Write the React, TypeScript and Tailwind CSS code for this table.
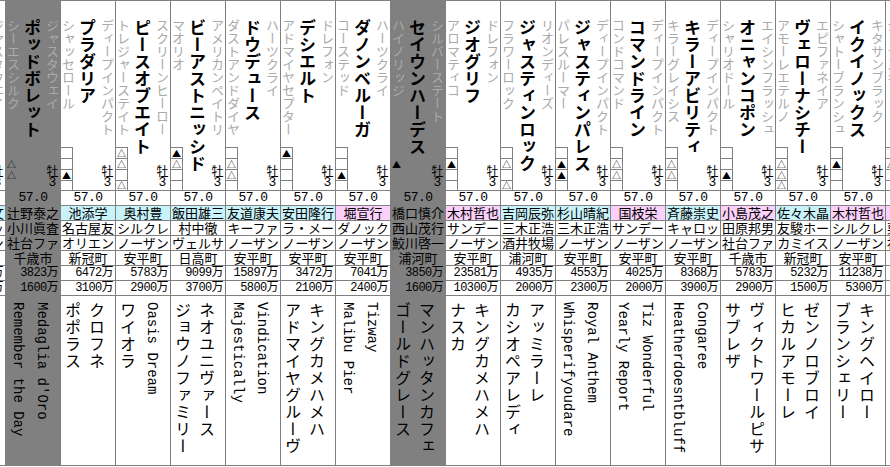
import clsx from "clsx";

// ──────────────────────────────────────────────
// Data
// ──────────────────────────────────────────────

interface Horse {
  dam: string;
  name: string;
  sire: string;
  marks: string; // 4 boxes, "-" = empty
  trainer: string;
  tc: "c" | "p" | "g";
  owner: string;
  breeder: string;
  area: string;
  earn: string;
  prize: string;
  bR: string;
  bL: string;
  gray?: boolean;
}

const horses: Horse[] = [
  { dam: "シュガーハート", name: "ソールオリエンス", sire: "ジャスタウェイ", marks: "-△--", trainer: "戸田博文", tc: "c", owner: "キャロッ", breeder: "ノーザン", area: "安平町", earn: "4562万", prize: "2100万", bR: "", bL: "" },
  { dam: "シーエスシルク", name: "ポッドボレット", sire: "ジャスタウェイ", marks: "-△△-", trainer: "辻野泰之", tc: "g", owner: "小川眞査", breeder: "社台ファ", area: "千歳市", earn: "3823万", prize: "1600万", bR: "Medaglia d'Oro", bL: "Remember the Day", gray: true },
  { dam: "シャッセロール", name: "プラダリア", sire: "ディープインパクト", marks: "--▲-", trainer: "池添学", tc: "c", owner: "名古屋友", breeder: "オリエン", area: "新冠町", earn: "6472万", prize: "3100万", bR: "クロフネ", bL: "ポポラス" },
  { dam: "トレジャーステイト", name: "ピースオブエイト", sire: "スクリーンヒーロー", marks: "△△-△", trainer: "奥村豊", tc: "c", owner: "シルクレ", breeder: "ノーザン", area: "安平町", earn: "5783万", prize: "2900万", bR: "Oasis Dream", bL: "ワイオラ" },
  { dam: "マオリオ", name: "ビーアストニッシド", sire: "アメリカンペイトリ", marks: "▲△--", trainer: "飯田雄三", tc: "c", owner: "村中徹", breeder: "ヴェルサ", area: "日高町", earn: "9099万", prize: "3700万", bR: "ネオユニヴァース", bL: "ジョウノファミリー" },
  { dam: "ダストアンドダイヤ", name: "ドウデュース", sire: "ハーツクライ", marks: "-△△-", trainer: "友道康夫", tc: "c", owner: "キーファ", breeder: "ノーザン", area: "安平町", earn: "15897万", prize: "5800万", bR: "Vindication", bL: "Majestically" },
  { dam: "アドマイヤセプター", name: "デシエルト", sire: "ドレフォン", marks: "▲---", trainer: "安田隆行", tc: "c", owner: "ラ・メー", breeder: "ノーザン", area: "安平町", earn: "3472万", prize: "2100万", bR: "キングカメハメハ", bL: "アドマイヤグルーヴ" },
  { dam: "コーステッド", name: "ダノンベルーガ", sire: "ハーツクライ", marks: "--▲-", trainer: "堀宣行", tc: "p", owner: "ダノック", breeder: "ノーザン", area: "安平町", earn: "7041万", prize: "2400万", bR: "Tizway", bL: "Malibu Pier" },
  { dam: "ハイノリッジ", name: "セイウンハーデス", sire: "シルバーステート", marks: "-▲--", trainer: "橋口慎介", tc: "g", owner: "西山茂行", breeder: "鮫川啓一", area: "浦河町", earn: "3850万", prize: "1600万", bR: "マンハッタンカフェ", bL: "ゴールドグレース", gray: true },
  { dam: "アロマティコ", name: "ジオグリフ", sire: "ドレフォン", marks: "-▲--", trainer: "木村哲也", tc: "p", owner: "サンデー", breeder: "ノーザン", area: "安平町", earn: "23581万", prize: "10300万", bR: "キングカメハメハ", bL: "ナスカ" },
  { dam: "フラワーロック", name: "ジャスティンロック", sire: "リオンディーズ", marks: "-△-△", trainer: "吉岡辰弥", tc: "c", owner: "三木正浩", breeder: "酒井牧場", area: "浦河町", earn: "4935万", prize: "2000万", bR: "アッミラーレ", bL: "カシオペアレディ" },
  { dam: "パレスルーマー", name: "ジャスティンパレス", sire: "ディープインパクト", marks: "-▲▲-", trainer: "杉山晴紀", tc: "c", owner: "三木正浩", breeder: "ノーザン", area: "安平町", earn: "4553万", prize: "2300万", bR: "Royal Anthem", bL: "Whisperifyoudare" },
  { dam: "コンドコマンド", name: "コマンドライン", sire: "ディープインパクト", marks: "-△△-", trainer: "国枝栄", tc: "p", owner: "サンデー", breeder: "ノーザン", area: "安平町", earn: "4025万", prize: "2000万", bR: "Tiz Wonderful", bL: "Yearly Report" },
  { dam: "キラーグレイシス", name: "キラーアビリティ", sire: "ディープインパクト", marks: "-△△-", trainer: "斉藤崇史", tc: "c", owner: "キャロッ", breeder: "ノーザン", area: "安平町", earn: "8368万", prize: "3900万", bR: "Congaree", bL: "Heatherdoesntbluff" },
  { dam: "シャリオドール", name: "オニャンコポン", sire: "エイシンフラッシュ", marks: "--▲-", trainer: "小島茂之", tc: "p", owner: "田原邦男", breeder: "社台ファ", area: "千歳市", earn: "5783万", prize: "2900万", bR: "ヴィクトワールピサ", bL: "サブレザ" },
  { dam: "アモーレエテルノ", name: "ヴェローナシチー", sire: "エピファネイア", marks: "-△△△", trainer: "佐々木晶", tc: "c", owner: "友駿ホー", breeder: "カミイス", area: "新冠町", earn: "5232万", prize: "1500万", bR: "ゼンノロブロイ", bL: "ヒカルアモーレ" },
  { dam: "シャトーブランシュ", name: "イクイノックス", sire: "キタサンブラック", marks: "-▲--", trainer: "木村哲也", tc: "p", owner: "シルクレ", breeder: "ノーザン", area: "安平町", earn: "11238万", prize: "5300万", bR: "キングヘイロー", bL: "ブランシェリー" },
  { dam: "ジェラスキャット", name: "ボルドグフーシュ", sire: "スクリーンヒーロー", marks: "-△--", trainer: "宮本博", tc: "p", owner: "栗本博晴", breeder: "社台ファ", area: "千歳市", earn: "6110万", prize: "2500万", bR: "Storm Cat", bL: "Jealous Again" },
];

const tcBg = {
  c: "bg-[#c9f3fb]",
  p: "bg-[#fbd0fb]",
  g: "",
};

const vert = "[writing-mode:vertical-rl] whitespace-nowrap overflow-hidden";
const mono = "font-['Liberation_Mono','Noto_Sans_CJK_JP',monospace]";
const line = "h-[15px] border-b border-[#808080] leading-[14px] whitespace-nowrap overflow-hidden";

const isLatin = (s: string) => /^[A-Za-z]/.test(s);

// ──────────────────────────────────────────────
// Pieces
// ──────────────────────────────────────────────

function Pedigree({ text }: { text: string }) {
  return (
    <div
      className={clsx(
        "h-full w-[24px] pt-[6px] leading-[24px]",
        vert,
        isLatin(text) ? clsx(mono, "text-[14px]") : "text-[16px] tracking-[1px]"
      )}
    >
      {text}
    </div>
  );
}

function Column({ h }: { h: Horse }) {
  return (
    <div
      className={clsx(
        "flex w-[55px] shrink-0 flex-col border-l border-[#808080] text-black",
        h.gray ? "bg-[#808080]" : "bg-white"
      )}
    >
      {/* names */}
      <div className="flex h-[191px] border-y border-[#808080]">
        <div className="flex w-[14px] flex-col">
          <div className={clsx("min-h-0 flex-1 pt-[18px] text-[13px] leading-[14px] text-[#aaaaaa]", vert)}>
            {h.dam}
          </div>
          <div className="flex w-[12px] flex-col border-t border-r border-[#808080]">
            {h.marks.split("").map((m, i) => (
              <div
                key={i}
                className={clsx(
                  "flex items-center justify-center text-[9px] leading-none",
                  i < 3 ? "h-[11px] border-b border-[#808080]" : "h-[9px]"
                )}
              >
                {m === "-" ? "" : m}
              </div>
            ))}
          </div>
        </div>
        <div className={clsx("h-full w-[25px] pt-[18px] text-[17px] font-bold leading-[25px]", vert)}>
          {h.name}
        </div>
        <div className="flex w-[15px] flex-col">
          <div className={clsx("min-h-0 flex-1 pt-[18px] text-[13px] leading-[15px] text-[#aaaaaa]", vert)}>
            {h.sire}
          </div>
          <div className="flex flex-col items-center pb-[2px]">
            <span className="block h-[12px] text-[12px] leading-[12px]">牡</span>
            <span className={clsx("block h-[11px] text-[13px] leading-[11px]", mono)}>3</span>
          </div>
        </div>
      </div>

      {/* rows */}
      <div className={clsx(line, mono, "text-center text-[13px] tracking-[-0.5px]")}>57.0</div>
      <div className={clsx(line, tcBg[h.tc], "text-center text-[13px]")}>{h.trainer}</div>
      <div className={clsx(line, "text-center text-[13px]")}>{h.owner}</div>
      <div className={clsx(line, "text-center text-[13px]")}>{h.breeder}</div>
      <div className={clsx(line, "text-center text-[13px]")}>{h.area}</div>
      <div className={clsx(line, mono, "pr-[2px] text-right text-[12px] tracking-[-0.6px]")}>{h.earn}</div>
      <div className={clsx(line, mono, "pr-[2px] text-right text-[12px] tracking-[-0.6px]")}>{h.prize}</div>

      {/* pedigree */}
      <div className="flex h-[170px] border-b border-[#808080]">
        <Pedigree text={h.bL} />
        <Pedigree text={h.bR} />
      </div>
    </div>
  );
}

// ──────────────────────────────────────────────
// Page
// ──────────────────────────────────────────────

export default function App() {
  return (
    <div className="h-[467px] w-[890px] overflow-hidden bg-white font-['Noto_Sans_CJK_JP','Noto_Sans',sans-serif]">
      <div className="-ml-[50px] flex">
        {horses.map((h, i) => (
          <Column key={i} h={h} />
        ))}
      </div>
    </div>
  );
}
